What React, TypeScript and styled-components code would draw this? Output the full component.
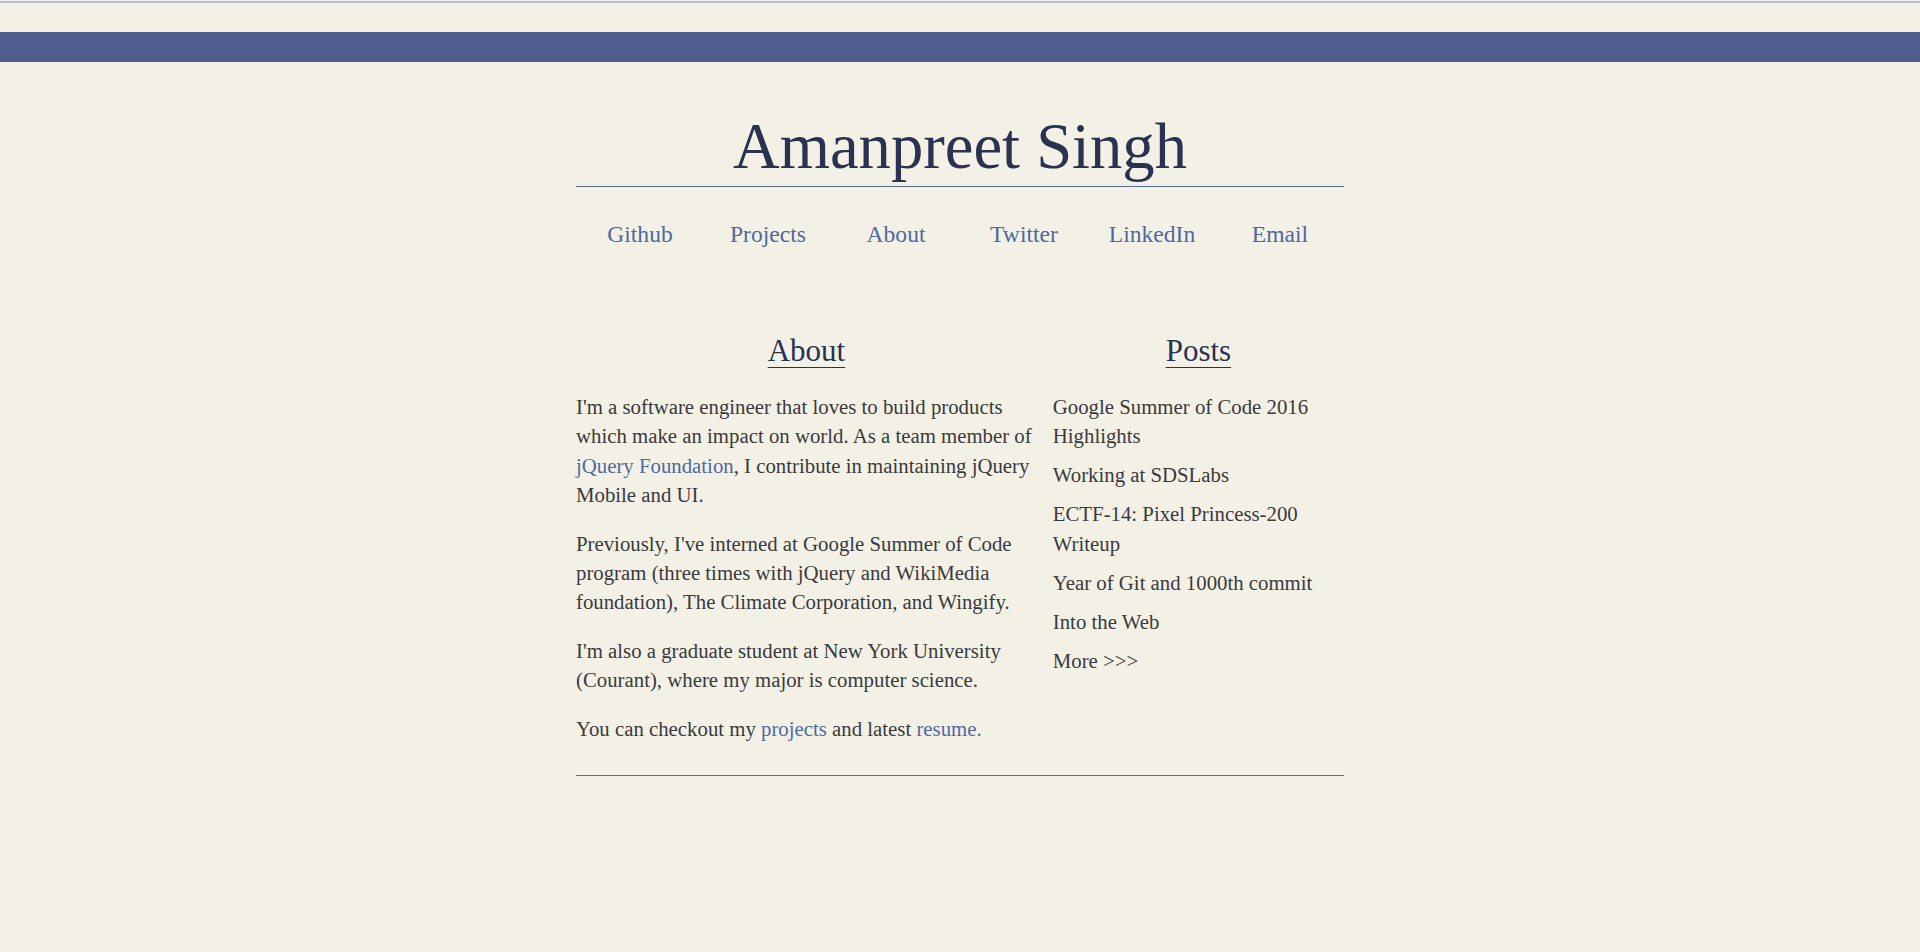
import React from "react";
import styled, { createGlobalStyle } from "styled-components";

const GlobalStyle = createGlobalStyle`
  html, body {
    margin: 0;
    padding: 0;
    background: #f3f1e6;
  }
  body {
    font-family: "Liberation Serif", "Times New Roman", serif;
    color: #3a3a3c;
    min-height: 952px;
  }
  a {
    color: #4f69a0;
    text-decoration: none;
  }
`;

const Page = styled.div`
  min-height: 952px;
  padding-top: 1px;
  box-sizing: border-box;
`;

const TopRule = styled.div`
  height: 2px;
  background: #bcbddc;
`;

const Band = styled.div`
  margin-top: 29px;
  height: 30px;
  background: #505e8e;
`;

const Container = styled.main`
  width: 768px;
  margin: 0 auto;
`;

const Header = styled.header`
  margin-top: 46px;
  border-bottom: 1px solid #5b6b98;
  padding-bottom: 2px;
  text-align: center;
`;

const Title = styled.h1`
  margin: 0;
  font-size: 64.6px;
  line-height: 76px;
  font-weight: normal;
  color: #2b3150;
`;

const Nav = styled.nav`
  display: grid;
  grid-template-columns: repeat(6, 1fr);
  margin-top: 32px;
`;

const NavLink = styled.a`
  text-align: center;
  font-size: 23.6px;
  line-height: 30px;
  color: #4f69a0;
`;

const Columns = styled.section`
  display: grid;
  grid-template-columns: 60% 40%;
  margin-top: 84px;
`;

const Column = styled.div<{ $inset?: boolean }>`
  padding-left: ${(p) => (p.$inset ? "16px" : "0")};
  min-width: 0;
`;

const SectionTitle = styled.h2`
  margin: 0 0 23px;
  text-align: center;
  font-size: 31px;
  line-height: 36px;
  font-weight: normal;
  color: #2b3150;
  text-decoration: underline;
  text-decoration-thickness: 1px;
  text-underline-offset: 6px;
`;

const Paragraph = styled.p`
  margin: 0 0 19px;
  font-size: 20.8px;
  line-height: 29.4px;
  color: #3a3a3c;
`;

const PostList = styled.ul`
  list-style: none;
  margin: 0;
  padding: 0;
  display: flex;
  flex-direction: column;
  gap: 9.6px;
`;

const PostItem = styled.li`
  font-size: 20.8px;
  line-height: 29.4px;
`;

const PostLink = styled.a`
  color: #3a3a3c;
`;

const Footer = styled.footer`
  margin-top: 13px;
  border-top: 1px solid #5b6b98;
`;

const navItems = ["Github", "Projects", "About", "Twitter", "LinkedIn", "Email"];

const posts = [
  "Google Summer of Code 2016 Highlights",
  "Working at SDSLabs",
  "ECTF-14: Pixel Princess-200 Writeup",
  "Year of Git and 1000th commit",
  "Into the Web",
  "More >>>",
];

export default function App() {
  return (
    <>
      <GlobalStyle />
      <Page>
        <TopRule />
        <Band />
        <Container>
          <Header>
            <Title>Amanpreet Singh</Title>
          </Header>
          <Nav>
            {navItems.map((n) => (
              <NavLink key={n} href="#">
                {n}
              </NavLink>
            ))}
          </Nav>
          <Columns>
            <Column>
              <SectionTitle>About</SectionTitle>
              <Paragraph>
                I'm a software engineer that loves to build products which make an
                impact on world. As a team member of <a href="#">jQuery Foundation</a>,
                I contribute in maintaining jQuery Mobile and UI.
              </Paragraph>
              <Paragraph>
                Previously, I've interned at Google Summer of Code program (three times
                with jQuery and WikiMedia foundation), The Climate Corporation, and
                Wingify.
              </Paragraph>
              <Paragraph>
                I'm also a graduate student at New York University (Courant), where my
                major is computer science.
              </Paragraph>
              <Paragraph>
                You can checkout my <a href="#">projects</a> and latest{" "}
                <a href="#">resume.</a>
              </Paragraph>
            </Column>
            <Column $inset>
              <SectionTitle>Posts</SectionTitle>
              <PostList>
                {posts.map((p) => (
                  <PostItem key={p}>
                    <PostLink href="#">{p}</PostLink>
                  </PostItem>
                ))}
              </PostList>
            </Column>
          </Columns>
          <Footer />
        </Container>
      </Page>
    </>
  );
}
